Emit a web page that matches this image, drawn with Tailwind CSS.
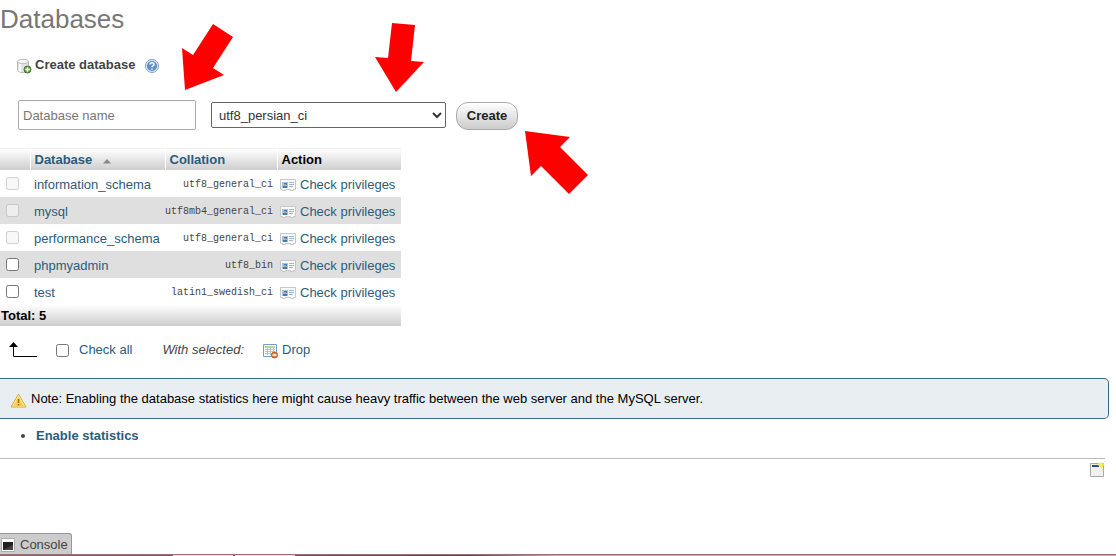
<!DOCTYPE html>
<html lang="en">

<head>
    <meta charset="UTF-8" />
    <meta name="viewport" content="width=device-width, initial-scale=1.0" />
    <!-- Tailwind CSS -->
    <script src="https://cdn.jsdelivr.net/npm/@tailwindcss/browser@4"></script>
    <title>Databases</title>
</head>

<body class="relative flex min-h-screen flex-col overflow-x-hidden bg-white font-['Liberation_Sans',Arial,sans-serif] text-[13px] leading-5 text-[#444]">

    <!-- Shared icons -->
    <svg class="hidden">
        <symbol id="icon-privileges" viewBox="0 0 16 12">
            <path d="M.5.5h15v10h-2v1h-3v-1h-5v1h-3v-1h-2z" fill="#fafafa" stroke="#c6c6c6" />
            <path d="M2 3h6v6H2z" fill="#9cc3ea" />
            <path d="M4 4h3v2H4zM3 7h4v2H3z" fill="#4a78ad" />
            <path d="M4 5h2v2H4z" fill="#c9a27c" />
            <path d="M9 3.500h5M9 5.500h5M9 7.500h4" stroke="#9db6d0" />
        </symbol>
    </svg>

    <main>
        <h1 class="pt-1 text-[26px] leading-[30px] text-[#777]">Databases</h1>

        <!-- Create database form -->
        <form class="pt-[21px] pl-4">
            <div class="flex h-5 items-center">
                <svg class="mt-[2px] size-4" viewBox="0 0 16 16">
                    <path d="M1.500 3.500v9c0 1 2.500 2 5.500 2s5.500-1 5.500-2v-9" fill="#e4e4e4" stroke="#b8b8b8" />
                    <path d="M3 5v8l2 1V6z" fill="#fff" />
                    <ellipse cx="7" cy="3.500" rx="5.500" ry="2.200" fill="#f5f5f5" stroke="#bdbdbd" />
                    <circle cx="11.500" cy="11.500" r="3.500" fill="#669f3c" stroke="#3f762c" />
                    <path d="M11.500 9.200v4.600M9.200 11.500h4.600" stroke="#fff" stroke-width="1.500" />
                </svg>
                <label for="db-name" class="pl-[3px] font-bold">Create database</label>
                <a href="#" aria-label="Documentation" class="mt-[2px] ml-[9px]">
                    <svg class="size-4" viewBox="0 0 16 16">
                        <circle cx="8" cy="8" r="6.500" fill="#dce9f6" stroke="#7fa1c9" />
                        <circle cx="8" cy="8" r="5" fill="#5d8ec6" />
                        <path d="M6 6.500C6 4.200 10 4.200 10 6.400 10 7.700 8 7.500 8 9.200M8 10.400v1.400" fill="none" stroke="#fff" stroke-width="1.500" />
                    </svg>
                </a>
            </div>
            <div class="flex items-center pt-[25px] pl-[2px]">
                <input id="db-name" type="text" placeholder="Database name"
                    class="h-[30px] w-[178px] rounded-[2px] border border-[#aaa] px-1 placeholder:text-[#777]" />
                <select aria-label="Collation"
                    class="ml-[15px] h-[26px] w-[235px] rounded-[2px] border border-[#666] bg-white pl-[3px] text-[#333]">
                    <option>utf8_persian_ci</option>
                </select>
                <button type="submit"
                    class="mt-[2px] ml-[10px] h-7 w-[62px] rounded-xl border border-[#aaa] bg-linear-to-b from-white to-[#ccc] font-bold text-[#222]">Create</button>
            </div>
        </form>

        <!-- Database list -->
        <table class="mt-[18px] w-[401px] table-fixed border-collapse">
            <colgroup>
                <col class="w-[30px]" />
                <col class="w-[135px]" />
                <col class="w-[112px]" />
                <col />
            </colgroup>
            <thead>
                <tr class="h-[21px] bg-linear-to-b from-white to-[#ccc] text-left text-[#2b5c7c]">
                    <th class="border-t border-r border-t-[#eee] border-r-white p-0"></th>
                    <th class="border-t border-r border-t-[#eee] border-r-white p-0 pt-px pl-1">
                        <a href="#" class="flex items-center">Database
                            <svg class="mt-[2px] ml-[11px] h-[5px] w-2" viewBox="0 0 8 5"><path d="M4 0l4 4.500H0z" fill="#888" /></svg>
                        </a>
                    </th>
                    <th class="border-t border-r border-t-[#eee] border-r-white p-0 pt-px pl-1"><a href="#">Collation</a></th>
                    <th class="border-t border-t-[#eee] p-0 pt-px pl-1 text-black">Action</th>
                </tr>
            </thead>
            <tbody class="text-[#2b5c7c]">
                <tr class="h-[27px]">
                    <td class="p-0"><input type="checkbox" disabled aria-label="information_schema" class="ml-[6px] block size-[13px]" /></td>
                    <td class="p-0 pt-[2px] pl-1"><a href="#">information_schema</a></td>
                    <td class="p-0 pt-[2px] pr-1 text-right font-['Liberation_Mono',monospace] text-[10px] text-[#444]">utf8_general_ci</td>
                    <td class="p-0 pt-[2px] pl-[3px]"><a href="#" class="flex items-center gap-1"><svg class="h-3 w-4"><use href="#icon-privileges" /></svg>Check privileges</a></td>
                </tr>
                <tr class="h-[27px] bg-[#dfdfdf]">
                    <td class="p-0"><input type="checkbox" disabled aria-label="mysql" class="ml-[6px] block size-[13px]" /></td>
                    <td class="p-0 pt-[2px] pl-1"><a href="#">mysql</a></td>
                    <td class="p-0 pt-[2px] pr-1 text-right font-['Liberation_Mono',monospace] text-[10px] text-[#444]">utf8mb4_general_ci</td>
                    <td class="p-0 pt-[2px] pl-[3px]"><a href="#" class="flex items-center gap-1"><svg class="h-3 w-4"><use href="#icon-privileges" /></svg>Check privileges</a></td>
                </tr>
                <tr class="h-[27px]">
                    <td class="p-0"><input type="checkbox" disabled aria-label="performance_schema" class="ml-[6px] block size-[13px]" /></td>
                    <td class="p-0 pt-[2px] pl-1"><a href="#">performance_schema</a></td>
                    <td class="p-0 pt-[2px] pr-1 text-right font-['Liberation_Mono',monospace] text-[10px] text-[#444]">utf8_general_ci</td>
                    <td class="p-0 pt-[2px] pl-[3px]"><a href="#" class="flex items-center gap-1"><svg class="h-3 w-4"><use href="#icon-privileges" /></svg>Check privileges</a></td>
                </tr>
                <tr class="h-[27px] bg-[#dfdfdf]">
                    <td class="p-0"><input type="checkbox" aria-label="phpmyadmin" class="ml-[6px] block size-[13px]" /></td>
                    <td class="p-0 pt-[2px] pl-1"><a href="#">phpmyadmin</a></td>
                    <td class="p-0 pt-[2px] pr-1 text-right font-['Liberation_Mono',monospace] text-[10px] text-[#444]">utf8_bin</td>
                    <td class="p-0 pt-[2px] pl-[3px]"><a href="#" class="flex items-center gap-1"><svg class="h-3 w-4"><use href="#icon-privileges" /></svg>Check privileges</a></td>
                </tr>
                <tr class="h-[27px]">
                    <td class="p-0"><input type="checkbox" aria-label="test" class="ml-[6px] block size-[13px]" /></td>
                    <td class="p-0 pt-[2px] pl-1"><a href="#">test</a></td>
                    <td class="p-0 pt-[2px] pr-1 text-right font-['Liberation_Mono',monospace] text-[10px] text-[#444]">latin1_swedish_ci</td>
                    <td class="p-0 pt-[2px] pl-[3px]"><a href="#" class="flex items-center gap-1"><svg class="h-3 w-4"><use href="#icon-privileges" /></svg>Check privileges</a></td>
                </tr>
            </tbody>
            <tfoot>
                <tr class="h-[21px] bg-linear-to-b from-white to-[#ccc] text-left text-black">
                    <th colspan="4" class="p-0 pt-px pl-px">Total: 5</th>
                </tr>
            </tfoot>
        </table>

        <!-- Bulk actions -->
        <div class="flex items-center pt-[14px] pl-2">
            <svg class="h-4 w-[30px]" viewBox="0 0 30 16">
                <path d="M5.500 3v11.500H29" fill="none" stroke="#000" />
                <path d="M5.500 0L10 5H1z" />
            </svg>
            <input type="checkbox" id="check-all" class="ml-[18px] size-[13px]" />
            <label for="check-all" class="ml-[10px] text-[#2b5c7c]">Check all</label>
            <em class="ml-[30px]">With selected:</em>
            <button type="button" class="ml-[19px] flex items-center gap-[3px] text-[#2b5c7c]">
                <svg class="mt-[2px] size-4" viewBox="0 0 16 16">
                    <path d="M.5 1.500h13v12H.5z" fill="#fff" stroke="#7c9cc4" />
                    <path d="M2 3h10v2H2z" fill="#b7d79a" />
                    <path d="M2 6.500h10M2 8.500h10M2 10.500h10M4.500 5v7M7.500 5v7M10.500 5v7" stroke="#b5c4d6" />
                    <circle cx="11.500" cy="12" r="3" fill="#e58035" stroke="#c2571b" />
                    <path d="M9.500 12h4" stroke="#fff" stroke-width="1.500" />
                </svg>
                Drop
            </button>
        </div>

        <!-- Notice -->
        <div class="mt-[18px] mr-[7px] flex h-[41px] items-center rounded-r-[5px] border border-l-0 border-[#3a6c7e] bg-[#e8eef1] pt-px pl-[10px] text-black">
            <svg class="mt-[2px] mr-[4px] size-[17px]" viewBox="0 0 17 17">
                <path d="M8.500 2L16 15H1z" fill="#fff3b8" stroke="#d7a537" stroke-linejoin="round" />
                <path d="M8.500 4.500L14 14H3z" fill="#f7cf4c" />
                <path d="M8.500 7v4M8.500 12v1.500" stroke="#a36b12" stroke-width="1.500" />
            </svg>
            <p>Note: Enabling the database statistics here might cause heavy traffic between the web server and the MySQL server.</p>
        </div>
        <ul class="list-disc pt-[7px] pl-9">
            <li><a href="#" class="font-bold text-[#2b5c7c]">Enable statistics</a></li>
        </ul>

        <div class="mt-3 mr-[11px] flex justify-end border-t border-[#bbb] pt-[3px]">
            <a href="#" aria-label="Open new phpMyAdmin window">
                <svg class="size-4" viewBox="0 0 16 16">
                    <path d="M1.500 1.500h13v13h-13z" fill="#f0f0ee" stroke="#aaa" />
                    <path d="M3 3h7v2H3z" fill="#244f91" />
                    <path d="M9 1h5v4h-3z" fill="#f5e82e" />
                    <path d="M12 0v6M9 3h6" stroke="#fff35a" />
                </svg>
            </a>
        </div>
    </main>

    <!-- Console bar -->
    <footer class="mt-auto">
        <button type="button"
            class="flex h-[21px] w-[72px] items-center gap-[5px] rounded-tr-[3px] border-t border-r border-[#999] bg-[#ccc] pt-px pl-px text-[#444]">
            <svg class="size-[14px]" viewBox="0 0 14 14">
                <path d="M.5.5h13v13H.5z" fill="#fff" stroke="#aaa" />
                <path d="M2 4h10v8H2z" fill="#222" />
                <path d="M2 12l10-5v5z" fill="#444" />
            </svg>
            Console
        </button>
        <div class="flex h-[2px] border-t border-[#9c7074] bg-linear-to-r from-[#9d5f66] from-0% via-[#6d3c48] via-42% to-[#d0a9ac] to-50%">
            <span class="ml-[173px] w-[60px] bg-[#f0e2e3]"></span>
            <span class="ml-[2px] w-[60px] bg-[#f0e2e3]"></span>
        </div>
    </footer>

    <!-- Pointers over the form controls -->
    <svg class="pointer-events-none absolute top-0 left-0 h-[200px] w-[600px]" viewBox="0 0 600 200" fill="#f00">
        <path d="M213 24L233 37 213 68 224 75 185 90 182 48 193 55z" />
        <path d="M392 23L415 25 411 61 424 62 396 92 375 57 388 58z" />
        <path d="M525 131L570 137 560 147 588 175 569 194 541 166 531 176z" />
    </svg>
</body>

</html>
